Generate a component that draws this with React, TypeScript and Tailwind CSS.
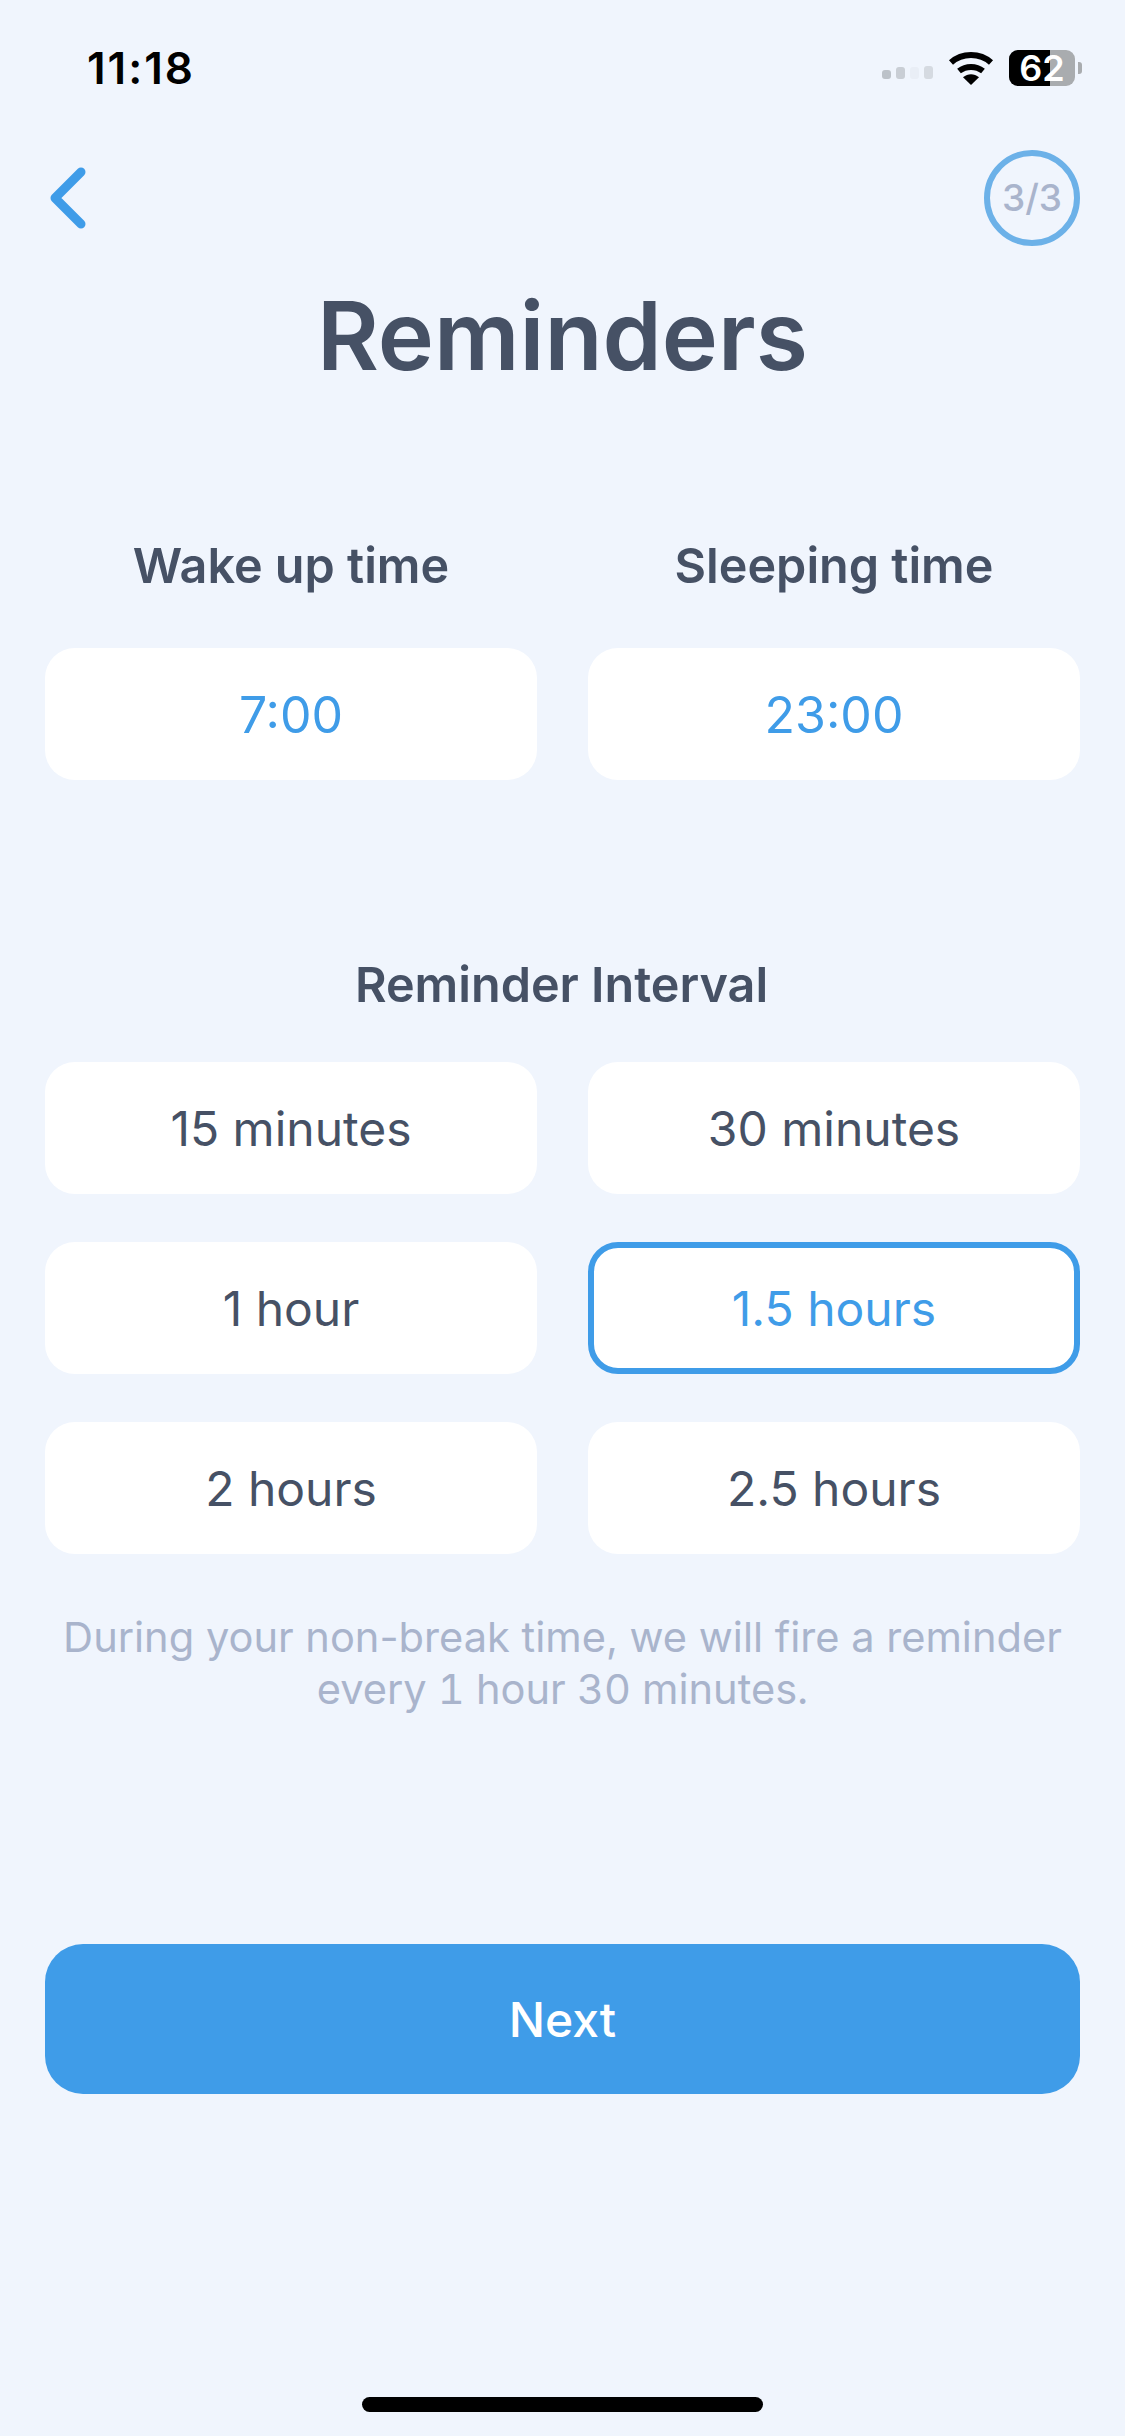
const intervals = ['15 minutes', '30 minutes', '1 hour', '1.5 hours', '2 hours', '2.5 hours']

const StatusBar = () => (
  <div className="flex h-[90px] items-center justify-between pt-[46px] pl-[87px] pr-[43px]">
    <span className="text-[44px] leading-[44px] font-semibold tracking-[2px] text-black">11:18</span>
    <div className="flex items-center">
      <div className="flex items-end gap-[5px] pt-[8px]">
        <div className="h-[9px] w-[9px] rounded-[3px] bg-[#bcc2c9]" />
        <div className="h-[12px] w-[9px] rounded-[3px] bg-[#c9ced5]" />
        <div className="h-[12px] w-[9px] rounded-[3px] bg-[#e9eef6]" />
        <div className="h-[13px] w-[9px] rounded-[3px] bg-[#d5dae1]" />
      </div>
      <svg className="ml-[15px]" width="46" height="34" viewBox="0 0 46 34" fill="none">
        <path d="M3 11.5C14 1.5 32 1.5 43 11.5" stroke="#000" strokeWidth="6" />
        <path d="M11 20C18 14.5 28 14.5 35 20" stroke="#000" strokeWidth="6" />
        <path d="M15 26.2C20 22.2 26 22.2 31 26.2L23 34Z" fill="#000" />
      </svg>
      <div className="relative ml-[15px] h-[36px] w-[66px] rounded-[9px] bg-[#a9acaf]">
        <div className="h-full w-[41px] rounded-l-[9px] bg-black" />
        <span className="absolute inset-0 flex items-center justify-center text-[36px] leading-[36px] font-semibold text-white">62</span>
      </div>
      <div className="ml-[3px] h-[12px] w-[4px] rounded-r-[3px] bg-[#a9acaf]" />
    </div>
  </div>
)

const TimeField = ({ label, value }: { label: string; value: string }) => (
  <div className="flex flex-col items-center">
    <p className="text-[48.5px] leading-[58px] font-semibold text-[#465165]">{label}</p>
    <div className="mt-[53px] flex h-[132px] w-full items-center justify-center rounded-[30px] bg-white pt-[2px] text-[50px] text-[#3f9ce8]">
      {value}
    </div>
  </div>
)

const App = () => {
  return (
    <div className="flex h-[2436px] w-[1125px] flex-col bg-[#f0f5fd] font-['Inter',sans-serif]">
      <StatusBar />

      <div className="mt-[60px] flex items-center justify-between pl-[50px] pr-[45px]">
        <svg width="36" height="62" viewBox="0 0 36 62" fill="none">
          <path d="M31 5L5 31L31 57" stroke="#3f9ce8" strokeWidth="9" strokeLinecap="round" strokeLinejoin="round" />
        </svg>
        <div className="flex h-[96px] w-[96px] items-center justify-center rounded-full border-[6px] border-[#6cb1e8] text-[37px] font-medium text-[#a9b4cc]">
          3/3
        </div>
      </div>

      <h1 className="mt-[32px] text-center text-[95px] leading-[116px] font-semibold text-[#465165]">Reminders</h1>

      <div className="mt-[143px] grid grid-cols-2 gap-x-[51px] px-[45px]">
        <TimeField label="Wake up time" value="7:00" />
        <TimeField label="Sleeping time" value="23:00" />
      </div>

      <p className="mt-[176px] pr-[2px] text-center text-[48.5px] leading-[58px] font-semibold text-[#465165]">Reminder Interval</p>

      <div className="mt-[48px] grid grid-cols-2 gap-x-[51px] gap-y-[48px] px-[45px]">
        {intervals.map((item) =>
          item === '1.5 hours' ? (
            <div key={item} className="flex h-[132px] items-center justify-center rounded-[30px] border-[6px] border-[#3f9ce8] bg-white pt-[2px] text-[48px] text-[#3f9ce8]">
              {item}
            </div>
          ) : (
            <div key={item} className="flex h-[132px] items-center justify-center rounded-[30px] bg-white pt-[2px] text-[48px] text-[#465165]">
              {item}
            </div>
          )
        )}
      </div>

      <p className="mt-[57px] px-[45px] text-center text-[41.6px] leading-[52px] text-[#a9b4cc]">
        During your non-break time, we will fire a reminder
        <br />
        <span className="tabular-nums">every 1 hour 30 minutes.</span>
      </p>

      <div className="mx-[45px] mt-[229px] flex h-[150px] items-center justify-center rounded-[38px] bg-[#3f9ce8] pt-[2px] text-[48px] font-medium text-white">
        Next
      </div>

      <div className="mx-auto mt-[303px] h-[15px] w-[401px] rounded-full bg-black" />
    </div>
  )
}

export default App
